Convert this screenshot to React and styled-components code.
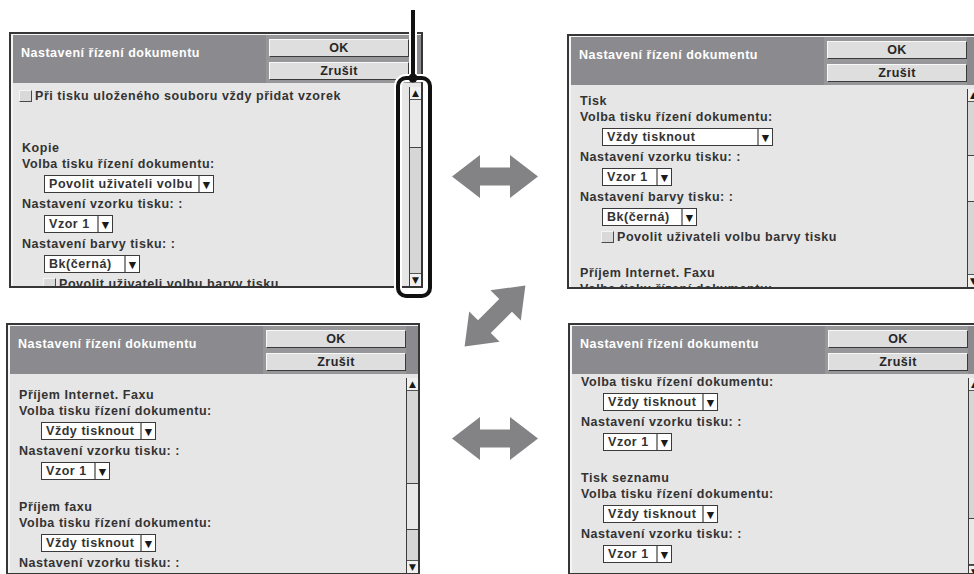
import styled, { createGlobalStyle } from "styled-components";

const GlobalStyle = createGlobalStyle`
  html, body {
    margin: 0;
    padding: 0;
    background: #ffffff;
  }
  body {
    font-family: "Liberation Sans", Arial, sans-serif;
  }
`;

const panels = {
  copy: {
    top: 32,
    left: 9,
    height: 256,
    offset: 3,
    thumb: { offset: 0, height: 48 },
    items: [
      { type: "check", text: "Při tisku uloženého souboru vždy přidat vzorek", indent: -3 },
      { type: "space", h: 36 },
      { type: "title", text: "Kopie" },
      { type: "label", text: "Volba tisku řízení dokumentu:" },
      { type: "select", text: "Povolit uživateli volbu", w: 170 },
      { type: "label", text: "Nastavení vzorku tisku: :" },
      { type: "select", text: "Vzor 1", w: 69 },
      { type: "label", text: "Nastavení barvy tisku: :" },
      { type: "select", text: "Bk(černá)", w: 96 },
      { type: "check", text: "Povolit uživateli volbu barvy tisku", indent: 21 },
    ],
  },
  print: {
    top: 34,
    left: 0,
    height: 255,
    offset: 10,
    thumb: { offset: 53, height: 47 },
    items: [
      { type: "title", text: "Tisk" },
      { type: "label", text: "Volba tisku řízení dokumentu:" },
      { type: "select", text: "Vždy tisknout", w: 171 },
      { type: "label", text: "Nastavení vzorku tisku: :" },
      { type: "select", text: "Vzor 1", w: 70 },
      { type: "label", text: "Nastavení barvy tisku: :" },
      { type: "select", text: "Bk(černá)", w: 95 },
      { type: "check", text: "Povolit uživateli volbu barvy tisku", indent: 21 },
      { type: "space", h: 20 },
      { type: "title", text: "Příjem Internet. Faxu" },
      { type: "label", text: "Volba tisku řízení dokumentu:" },
      { type: "select", text: "Vždy tisknout", w: 115 },
    ],
  },
  fax: {
    top: 35,
    left: 6,
    height: 252,
    offset: 15,
    thumb: { offset: 92, height: 47 },
    items: [
      { type: "title", text: "Příjem Internet. Faxu" },
      { type: "label", text: "Volba tisku řízení dokumentu:" },
      { type: "select", text: "Vždy tisknout", w: 115 },
      { type: "label", text: "Nastavení vzorku tisku: :" },
      { type: "select", text: "Vzor 1", w: 69 },
      { type: "space", h: 20 },
      { type: "title", text: "Příjem faxu" },
      { type: "label", text: "Volba tisku řízení dokumentu:" },
      { type: "select", text: "Vždy tisknout", w: 115 },
      { type: "label", text: "Nastavení vzorku tisku: :" },
      { type: "select", text: "Vzor 1", w: 69 },
    ],
  },
  list: {
    top: 34,
    left: 1,
    height: 252,
    offset: -2,
    thumb: { offset: 127, height: 47 },
    items: [
      { type: "label", text: "Volba tisku řízení dokumentu:" },
      { type: "select", text: "Vždy tisknout", w: 115 },
      { type: "label", text: "Nastavení vzorku tisku: :" },
      { type: "select", text: "Vzor 1", w: 69 },
      { type: "space", h: 20 },
      { type: "title", text: "Tisk seznamu" },
      { type: "label", text: "Volba tisku řízení dokumentu:" },
      { type: "select", text: "Vždy tisknout", w: 115 },
      { type: "label", text: "Nastavení vzorku tisku: :" },
      { type: "select", text: "Vzor 1", w: 69 },
    ],
  },
};

const ARROW_POINTS =
  "1,22.5 29,1 29,13.5 59,13.5 59,1 87,22.5 59,44 59,31.5 29,31.5 29,44";

const SideArrow = ({ top }) => (
  <ArrowSvg $top={top} width="88" height="45" viewBox="0 0 88 45">
    <polygon points={ARROW_POINTS} fill="#838386" />
  </ArrowSvg>
);

const DiagonalArrow = ({ top }) => (
  <ArrowSvg $top={top} width="90" height="90" viewBox="0 0 90 90">
    <g transform="rotate(-45 45 45)">
      <polygon points={ARROW_POINTS} transform="translate(1 22.5)" fill="#838386" />
    </g>
  </ArrowSvg>
);

const Callout = () => (
  <CalloutLayer width="44" height="294" viewBox="0 0 44 294">
    <g fill="none" stroke="#ffffff" strokeWidth="8">
      <line x1="21" y1="2" x2="21" y2="70" />
      <rect x="6" y="70" width="32" height="218" rx="8" />
    </g>
    <g fill="none" stroke="#111111" strokeWidth="4">
      <line x1="21" y1="2" x2="21" y2="70" />
      <rect x="6" y="70" width="32" height="218" rx="8" />
    </g>
    <circle cx="21" cy="70" r="4.5" fill="#111111" />
  </CalloutLayer>
);

const Item = ({ item }) => {
  switch (item.type) {
    case "space":
      return <Spacer $h={item.h} />;
    case "title":
      return (
        <TitleRow>
          <Text>{item.text}</Text>
        </TitleRow>
      );
    case "label":
      return (
        <Row>
          <Text>{item.text}</Text>
        </Row>
      );
    case "select":
      return (
        <Row $indent={22}>
          <Select $w={item.w}>
            <SelectValue>{item.text}</SelectValue>
            <SelectArrow>▼</SelectArrow>
          </Select>
        </Row>
      );
    case "check":
      return (
        <Row $indent={item.indent}>
          <CheckBox />
          <Text>{item.text}</Text>
        </Row>
      );
    default:
      return null;
  }
};

const SettingsPanel = ({ data }) => (
  <Panel $top={data.top} $left={data.left} $height={data.height}>
    <Header>
      <HeaderTitle>Nastavení řízení dokumentu</HeaderTitle>
      <ButtonGroup>
        <Button>OK</Button>
        <Button>Zrušit</Button>
      </ButtonGroup>
    </Header>
    <Body>
      <Content>
        <ContentInner $offset={data.offset}>
          {data.items.map((item, i) => (
            <Item key={i} item={item} />
          ))}
        </ContentInner>
      </Content>
      <Scrollbar>
        <ScrollButton $up>▲</ScrollButton>
        <Track>
          <Thumb $offset={data.thumb.offset} $height={data.thumb.height} />
        </Track>
        <ScrollButton>▼</ScrollButton>
      </Scrollbar>
    </Body>
  </Panel>
);

const App = () => {
  return (
    <>
      <GlobalStyle />
      <Page>
        <Column>
          <SettingsPanel data={panels.copy} />
          <SettingsPanel data={panels.fax} />
        </Column>
        <ArrowColumn>
          <SideArrow top={154} />
          <DiagonalArrow top={72} />
          <SideArrow top={55} />
        </ArrowColumn>
        <Column>
          <SettingsPanel data={panels.print} />
          <SettingsPanel data={panels.list} />
        </Column>
        <Callout />
      </Page>
    </>
  );
};

const Page = styled.div`
  position: relative;
  width: 974px;
  height: 574px;
  overflow: hidden;
  background: #ffffff;
  display: grid;
  grid-template-columns: 428px 139px 1fr;
`;

const Column = styled.div`
  display: flex;
  flex-direction: column;
  min-width: 0;
`;

const ArrowColumn = styled(Column)`
  align-items: center;
  padding-right: 5px;
`;

const ArrowSvg = styled.svg`
  display: block;
  flex-shrink: 0;
  margin-top: ${(p) => p.$top}px;
`;

const CalloutLayer = styled.svg`
  position: absolute;
  left: 392px;
  top: 8px;
  overflow: visible;
`;

const Panel = styled.section`
  flex-shrink: 0;
  box-sizing: border-box;
  width: 414px;
  height: ${(p) => p.$height}px;
  margin: ${(p) => p.$top}px 0 0 ${(p) => p.$left}px;
  border: 2px solid #363636;
  background: #f5f5f5;
  padding: 1px 0 0 2px;
  display: flex;
  flex-direction: column;
  overflow: hidden;
`;

const Header = styled.div`
  flex-shrink: 0;
  height: 48px;
  box-sizing: border-box;
  background: #8b8b8f;
  display: flex;
  justify-content: space-between;
  padding: 0 13px 0 8px;
`;

const HeaderTitle = styled.div`
  margin-top: 10px;
  line-height: 16px;
  font-size: 12.5px;
  font-weight: bold;
  letter-spacing: 0.5px;
  color: #ffffff;
  white-space: nowrap;
`;

const ButtonGroup = styled.div`
  display: flex;
  flex-direction: column;
  gap: 5px;
  padding: 4px 0 3px 3px;
  margin-right: -1px;
  background: #97979a;
`;

const Button = styled.div`
  box-sizing: border-box;
  width: 140px;
  height: 18px;
  background: #dedede;
  border: 1px solid;
  border-color: #f8f8f8 #3a3a3a #3a3a3a #f8f8f8;
  font-size: 12.5px;
  font-weight: bold;
  letter-spacing: 0.5px;
  line-height: 16px;
  color: #262626;
  text-align: center;
`;

const Body = styled.div`
  flex: 1;
  min-height: 0;
  display: flex;
  background: #e6e6e6;
`;

const Content = styled.div`
  flex: 1;
  min-width: 0;
  overflow: hidden;
  padding-left: 9px;
`;

const ContentInner = styled.div`
  display: flex;
  flex-direction: column;
  margin-top: ${(p) => p.$offset}px;
`;

const Row = styled.div`
  flex-shrink: 0;
  height: 20px;
  display: flex;
  align-items: center;
  gap: 3px;
  margin-left: ${(p) => p.$indent || 0}px;
`;

const TitleRow = styled(Row)`
  height: 12px;
`;

const Spacer = styled.div`
  flex-shrink: 0;
  height: ${(p) => p.$h}px;
`;

const Text = styled.span`
  font-size: 12.5px;
  font-weight: bold;
  letter-spacing: 0.55px;
  line-height: 16px;
  color: #333333;
  white-space: nowrap;
`;

const Select = styled.div`
  box-sizing: border-box;
  width: ${(p) => p.$w}px;
  height: 18px;
  display: flex;
  border: 1px solid #3a3a3a;
  background: #ffffff;
`;

const SelectValue = styled(Text)`
  flex: 1;
  padding-left: 4px;
  overflow: hidden;
`;

const SelectArrow = styled.span`
  width: 13px;
  border-left: 2px solid #8c8c8c;
  display: flex;
  align-items: center;
  justify-content: center;
  font-family: "DejaVu Sans", sans-serif;
  font-size: 9.5px;
  color: #1a1a1a;
`;

const CheckBox = styled.span`
  box-sizing: border-box;
  width: 13px;
  height: 12px;
  flex-shrink: 0;
  background: #d9d9d9;
  border: 1px solid;
  border-color: #f4f4f4 #4a4a4a #4a4a4a #f4f4f4;
`;

const Scrollbar = styled.div`
  width: 12px;
  flex-shrink: 0;
  box-sizing: border-box;
  margin-top: 4px;
  display: flex;
  flex-direction: column;
  border-left: 1px solid #3c3c3c;
  background: #d6d6d6;
`;

const ScrollButton = styled.div`
  flex-shrink: 0;
  height: 13px;
  box-sizing: border-box;
  background: #f0f0f0;
  ${(p) => (p.$up ? "border-bottom" : "border-top")}: 1px solid #555555;
  display: flex;
  align-items: center;
  justify-content: center;
  font-family: "DejaVu Sans", sans-serif;
  font-size: 9px;
  color: #1a1a1a;
`;

const Track = styled.div`
  flex: 1;
  display: flex;
  flex-direction: column;
`;

const Thumb = styled.div`
  flex-shrink: 0;
  box-sizing: border-box;
  margin-top: ${(p) => p.$offset}px;
  height: ${(p) => p.$height}px;
  background: #e9e9e9;
  border-bottom: 1px solid #444444;
  ${(p) => (p.$offset > 0 ? "border-top: 1px solid #444444;" : "")}
`;

export default App;
